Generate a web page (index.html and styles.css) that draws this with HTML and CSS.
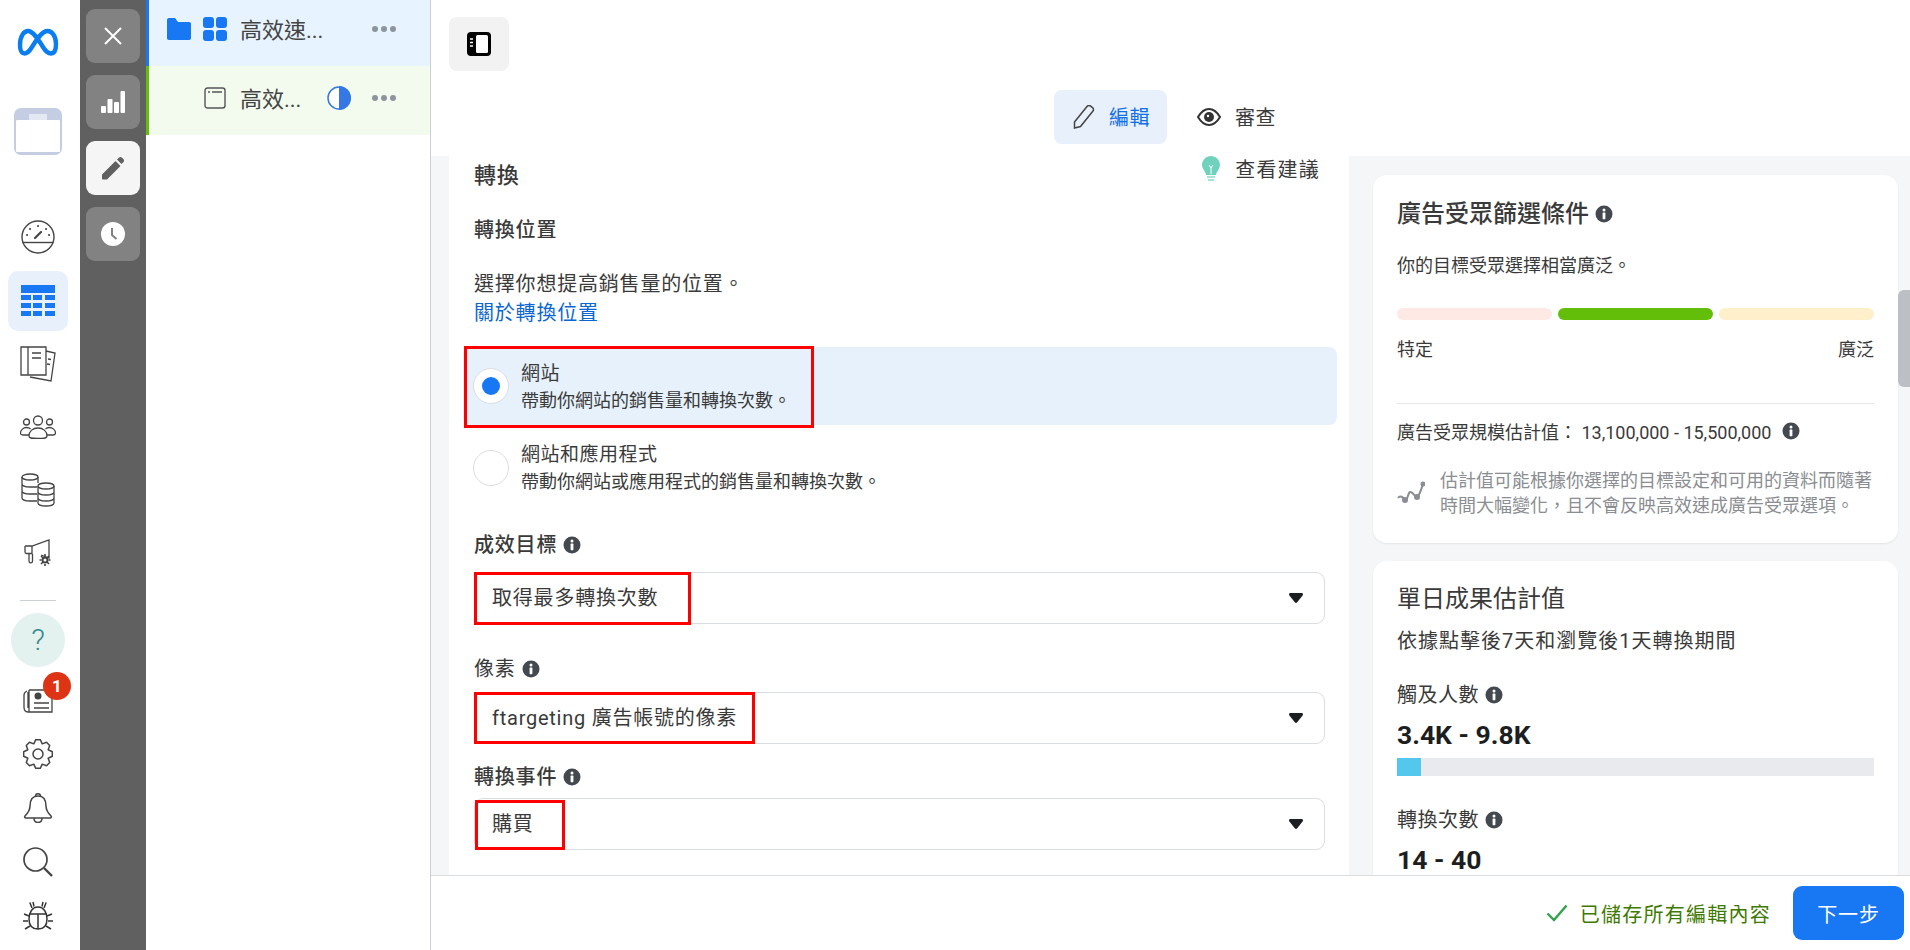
FILE: index.html
```html
<!DOCTYPE html>
<html>
	<head>
		<meta charset="UTF-8">
		<title>廣告編輯</title>
		<link rel="stylesheet" href="styles.css">
	</head>
	<body>
		<svg class="defs" width="0" height="0">
			<symbol id="info" viewBox="0 0 18 18">
				<circle cx="9" cy="9" r="8.5" fill="#444950"/>
				<circle cx="9" cy="5" r="1.5" fill="#fff"/>
				<rect x="7.6" y="7.6" width="2.8" height="6.6" rx=".6" fill="#fff"/>
			</symbol>
			<symbol id="caret" viewBox="0 0 16 12">
				<path d="M1 2.5c0-.8.5-1.5 1.4-1.5h11.2c.9 0 1.4.7 1.4 1.5 0 .4-.1.7-.4 1L9 10.6c-.5.6-1.5.6-2 0L1.400 3.500c-.3-.3-.4-.6-.4-1z" fill="#1c1e21"/>
			</symbol>
			<symbol id="dots" viewBox="0 0 24 6">
				<circle cx="3" cy="3" r="3" fill="#8d949e"/>
				<circle cx="12" cy="3" r="3" fill="#8d949e"/>
				<circle cx="21" cy="3" r="3" fill="#8d949e"/>
			</symbol>
		</svg>
		<div class="app">
			<nav class="nav">
				<svg class="logo" width="42" height="28" viewBox="0 0 42 28"><path d="M3 17C3 8 7 3 11 3c5 0 10 8 15 16 3 5 5 6.500 8 6.500s5-3.500 5-9.500c0-8-4-13-8.500-13C25 3 20 11 15 19c-3 5-5 6.500-7.500 6.500C4.500 25.500 3 22 3 17z" fill="none" stroke="#0a7ef0" stroke-width="4.400"/></svg>
				<svg class="case" width="48" height="47" viewBox="0 0 48 47"><rect width="48" height="47" rx="7" fill="#c5cde3"/><rect x="2" y="12" width="44" height="32" rx="1" fill="#fff"/><rect x="15" y="6" width="18" height="6" fill="#e4e8f2"/></svg>
				<svg class="gauge" width="34" height="34" viewBox="0 0 34 34" fill="none" stroke="#444" stroke-width="1.400"><circle cx="17" cy="17" r="16"/><path d="M1.500 22.500h31"/><path d="M14 18l6-6" stroke-width="2.200" stroke-linecap="round"/><path d="M6 15h.1M9 9h.1M17 6h.1M25 9h.1M28 15h.1" stroke-width="2" stroke-linecap="round"/></svg>
				<div class="nav-mid">
					<div class="nav-item nav-item-on">
						<svg width="34" height="32" viewBox="0 0 34 32" fill="#1877f2"><rect width="34" height="8"/><rect y="10" width="10" height="5"/><rect x="12" y="10" width="9" height="5"/><rect x="24" y="10" width="10" height="5"/><rect y="18" width="10" height="5"/><rect x="12" y="18" width="9" height="5"/><rect x="24" y="18" width="10" height="5"/><rect y="26" width="10" height="5"/><rect x="12" y="26" width="9" height="5"/><rect x="24" y="26" width="10" height="5"/></svg>
					</div>
					<div class="nav-item">
						<svg width="36" height="36" viewBox="0 0 36 36" fill="none" stroke="#444" stroke-width="1.300"><path d="M26 5l9 2-4 28-21-4"/><path d="M1 1h25v28H1zM8 1v28"/><path d="M12 7h9M12 12h9M28 13l3 .5M27 18l3 .5"/></svg>
					</div>
					<div class="nav-item">
						<svg width="36" height="24" viewBox="0 0 36 24" fill="none" stroke="#444" stroke-width="1.300"><circle cx="18" cy="5.500" r="4.500"/><circle cx="6.500" cy="7" r="3"/><circle cx="29.500" cy="7" r="3"/><path d="M9 21c0-5 4-8 9-8s9 3 9 8c0 2-2 2.500-9 2.500S9 23 9 21z"/><path d="M9 20H3c-2 0-2.500-1-2.500-2 0-3 3-5.500 6-5.500 1.500 0 3 .5 4 1.500M27 20h6c2 0 2.500-1 2.500-2 0-3-3-5.500-6-5.500-1.500 0-3 .5-4 1.500"/></svg>
					</div>
					<div class="nav-item">
						<svg width="34" height="34" viewBox="0 0 34 34" fill="none" stroke="#444" stroke-width="1.300"><ellipse cx="9" cy="4" rx="8" ry="3"/><path d="M1 4v21c0 1.500 3 3 8 3h7M17 4v6M1 11c0 1.500 3 3 8 3h7M1 18c0 1.500 3 3 8 3h7"/><ellipse cx="25" cy="13" rx="8" ry="3"/><path d="M17 13v17c0 1.500 3 3 8 3s8-1.500 8-3V13M17 19c0 1.500 3 3 8 3s8-1.500 8-3M17 25c0 1.500 3 3 8 3s8-1.500 8-3"/></svg>
					</div>
					<div class="nav-item">
						<svg width="28" height="28" viewBox="0 0 28 28" fill="none" stroke="#444" stroke-width="1.300"><path d="M1 7h7L25 1v18l-8-3"/><path d="M1 7v6c0 1 .5 1.500 1.500 1.500H8V7M5 14.500V22c0 2.500 3.500 2.500 3.500 0v-7"/><circle cx="21" cy="21" r="2.500" stroke-width="2"/><path d="M21 15v2M21 25v2M15.500 21h2M24.500 21h2M17 17l2 2M23 23l2 2M25 17l-2 2M19 23l-2 2" stroke-width="1.600"/></svg>
					</div>
				</div>
				<div class="nav-line"></div>
				<div class="help">?</div>
				<div class="nav-bottom">
					<div class="nav-item">
						<div class="news">
							<svg width="30" height="28" viewBox="0 0 30 28" fill="none" stroke="#444" stroke-width="1.300"><path d="M6 4h23v22H5c-3 0-4-2-4-5V9c0-2 1-3 3-4"/><path d="M6 4v22M5 6v16"/><circle cx="15" cy="10" r="3.500" fill="#444" stroke="none"/><path d="M11 17h15M11 22h15" stroke-width="1.600"/></svg>
							<span class="badge">1</span>
						</div>
					</div>
					<div class="nav-item">
						<svg width="30" height="30" viewBox="0 0 30 30" fill="none" stroke="#444" stroke-width="1.500" stroke-linejoin="round"><circle cx="15" cy="15" r="5"/><path d="M12.730.670H17.270L19.210 4.840 23.520 3.270 26.730 6.480 25.160 10.790 29.330 12.730V17.270L25.160 19.210 26.730 23.520 23.520 26.730 19.210 25.160 17.270 29.330H12.730L10.790 25.160 6.480 26.730 3.270 23.520 4.840 19.210.67 17.270V12.730L4.840 10.790 3.270 6.480 6.480 3.270 10.790 4.840z"/></svg>
					</div>
					<div class="nav-item">
						<svg width="30" height="30" viewBox="0 0 30 30" fill="none" stroke="#444" stroke-width="1.500"><path d="M15 3c-6 0-8 5-8 10 0 4-2 7-5 10-.8 1-.3 2 1 2h24c1.300 0 1.800-1 1-2-3-3-5-6-5-10 0-5-2-10-8-10z"/><path d="M12.500 3.500C12.500 1.500 14 .8 15 .8s2.500.7 2.500 2.700M11 25c0 3 2 4.500 4 4.500s4-1.500 4-4.500"/></svg>
					</div>
					<div class="nav-item">
						<svg width="30" height="30" viewBox="0 0 30 30" fill="none" stroke="#444" stroke-width="1.700"><circle cx="12.500" cy="12.500" r="11.500"/><path d="M21 21l8 8" stroke-width="2.400"/></svg>
					</div>
					<div class="nav-item">
						<svg width="30" height="30" viewBox="0 0 30 30" fill="none" stroke="#333" stroke-width="1.500"><path d="M15 6c-6 0-9 6-9 12s3 10 9 10 9-4 9-10-3-12-9-12z"/><path d="M6 13h18M15 13v15M9 7 7 2h-.5M21 7l2-5h.5M11 5.500 10 1M19 5.500 20 1M6 15l-5-2M24 15l5-2M5 20H0M25 20h5M7 25l-5 3M23 25l5 3"/></svg>
					</div>
				</div>
			</nav>
			<div class="tools">
				<div class="tool">
					<svg width="22" height="22" viewBox="0 0 22 22" stroke="#fff" stroke-width="2"><path d="M3 3l16 16M19 3L3 19"/></svg>
				</div>
				<div class="tool">
					<svg width="24" height="22" viewBox="0 0 24 22" fill="#fff"><rect y="15" width="5" height="7" rx="1"/><rect x="6.500" y="8" width="5" height="14" rx="1"/><rect x="13" y="11" width="5" height="11" rx="1"/><rect x="19.500" y="0" width="4.500" height="22" rx="1"/></svg>
				</div>
				<div class="tool tool-on">
					<svg width="24" height="24" viewBox="0 0 24 24" fill="#606060"><path d="M1 18.500 14.500 5l5 5L6 23.500H2c-.6 0-1-.4-1-1zM16 3.500l1.800-1.800c1-1 2.200-1 3.200 0l1.300 1.300c1 1 1 2.200 0 3.200L20.500 8z"/></svg>
				</div>
				<div class="tool">
					<svg width="24" height="24" viewBox="0 0 24 24"><circle cx="12" cy="12" r="12" fill="#fff"/><path d="M11 6v7l4.500 4" fill="none" stroke="#828282" stroke-width="2"/></svg>
				</div>
			</div>
			<aside class="tree">
				<div class="tree-row tree-row-blue">
					<svg class="folder" width="24" height="22" viewBox="0 0 24 22" fill="#1877f2"><path d="M0 2c0-1 .7-2 2-2h6l3 4h11c1.300 0 2 .8 2 2v14c0 1-.7 2-2 2H2c-1.300 0-2-1-2-2z"/></svg>
					<svg width="24" height="24" viewBox="0 0 24 24" fill="#1877f2"><rect width="11" height="11" rx="3"/><rect x="13" width="11" height="11" rx="3"/><rect y="13" width="11" height="11" rx="3"/><rect x="13" y="13" width="11" height="11" rx="3"/></svg>
					<span class="tree-name">高效速...</span>
					<svg class="tree-dots" width="24" height="6"><use href="#dots"/></svg>
				</div>
				<div class="tree-row tree-row-green">
					<svg class="page-icon" width="22" height="22" viewBox="0 0 22 22" fill="none" stroke="#555" stroke-width="1.400"><rect x="1" y="1" width="20" height="20" rx="2.500"/><path d="M4 5h2M8 5h10"/></svg>
					<span class="tree-name">高效...</span>
					<svg class="half" width="24" height="24" viewBox="0 0 24 24"><circle cx="12" cy="12" r="11" fill="#fff" stroke="#3578e5" stroke-width="1.500"/><path d="M12 0a12 12 0 0 1 0 24z" fill="#3578e5"/></svg>
					<svg class="tree-dots tree-dots-near" width="24" height="6"><use href="#dots"/></svg>
				</div>
			</aside>
			<main class="main">
				<header class="topbar">
					<div class="toggle">
						<svg width="24" height="24" viewBox="0 0 24 24"><rect width="24" height="24" rx="4" fill="#000"/><rect x="9" y="3" width="12" height="18" rx="1.500" fill="#fff"/><path d="M3 7h3M3 10.500h3M3 14h3" stroke="#fff" stroke-width="1.500"/></svg>
					</div>
					<div class="tabs">
						<div class="tab tab-on">
							<svg width="22" height="24" viewBox="0 0 22 24" fill="none" stroke="#444" stroke-width="1.500"><path d="M1.500 17.500 14 2c1-1.200 2.500-1.300 3.700-.3l1.800 1.400c1.200 1 1.300 2.500.3 3.700L7.500 22l-6 1.500z" transform="translate(0 -.5)"/></svg>
							<span>編輯</span>
						</div>
						<div class="tab tab-off">
							<svg width="24" height="18" viewBox="0 0 24 18"><path d="M1 9c3-5 7-8 11-8s8 3 11 8c-3 5-7 8-11 8S4 14 1 9z" fill="#fff" stroke="#333" stroke-width="2"/><circle cx="12" cy="9" r="5" fill="#333"/><circle cx="11" cy="8" r="1.200" fill="#fff"/></svg>
							<span>審查</span>
						</div>
					</div>
				</header>
				<div class="content">
					<section class="form">
						<div class="form-head">
							<h2 class="form-title">轉換</h2>
							<div class="tips">
								<svg width="18" height="25" viewBox="0 0 18 25"><path d="M9 0c5 0 9 4 9 9 0 3-2 5-3.500 8-.4 1-.5 1.500-.5 2H4c0-.5-.1-1-.5-2C2 14 0 12 0 9c0-5 4-9 9-9z" fill="#6fd2bc"/><path d="M7 9l2 3 2-3M9 12v6" stroke="#fff" stroke-width="1" fill="none"/><rect x="5" y="20" width="8" height="2" fill="#a8e4d6"/><rect x="6" y="23" width="6" height="2" fill="#a8e4d6"/></svg>
								<span>查看建議</span>
							</div>
						</div>
						<h3 class="label label-place">轉換位置</h3>
						<p class="desc">選擇你想提高銷售量的位置。</p>
						<a class="link" href="#">關於轉換位置</a>
						<div class="option option-on">
							<span class="radio"><span class="radio-dot"></span></span>
							<div class="option-text">
								<div class="option-title">網站</div>
								<div class="option-sub">帶動你網站的銷售量和轉換次數。</div>
							</div>
							<span class="mark mark-option"></span>
						</div>
						<div class="option option-off">
							<span class="radio"></span>
							<div class="option-text">
								<div class="option-title">網站和應用程式</div>
								<div class="option-sub">帶動你網站或應用程式的銷售量和轉換次數。</div>
							</div>
						</div>
						<h3 class="label label-goal">成效目標 <svg class="info" width="18" height="18"><use href="#info"/></svg></h3>
						<div class="select select-goal">
							<span>取得最多轉換次數</span>
							<svg width="16" height="12"><use href="#caret"/></svg>
							<span class="mark mark-goal"></span>
						</div>
						<h3 class="label label-thin label-pixel">像素 <svg class="info" width="18" height="18"><use href="#info"/></svg></h3>
						<div class="select select-pixel">
							<span>ftargeting 廣告帳號的像素</span>
							<svg width="16" height="12"><use href="#caret"/></svg>
							<span class="mark mark-pixel"></span>
						</div>
						<h3 class="label label-event">轉換事件 <svg class="info" width="18" height="18"><use href="#info"/></svg></h3>
						<div class="select select-event">
							<span>購買</span>
							<svg width="16" height="12"><use href="#caret"/></svg>
							<span class="mark mark-event"></span>
						</div>
					</section>
					<section class="side">
						<div class="card card-audience">
							<h2 class="card-title">廣告受眾篩選條件 <svg class="info" width="18" height="18"><use href="#info"/></svg></h2>
							<p class="card-sub">你的目標受眾選擇相當廣泛。</p>
							<div class="meter">
								<span class="meter-low"></span>
								<span class="meter-mid"></span>
								<span class="meter-high"></span>
							</div>
							<div class="meter-labels"><span>特定</span><span>廣泛</span></div>
							<div class="card-line"></div>
							<div class="size">廣告受眾規模估計值： 13,100,000 - 15,500,000 <svg class="info info-up" width="18" height="18"><use href="#info"/></svg></div>
							<div class="note">
								<svg width="28" height="24" viewBox="0 0 28 24" fill="none" stroke="#8a8d91" stroke-width="2"><path d="M1 17c2-3 5-1 7 2 2 2 3-7 5-8 3-1 5 6 7 5 3-1 4-10 7-14"/><circle cx="8" cy="19" r="3" fill="#8a8d91" stroke="none"/><circle cx="20" cy="16" r="3" fill="#8a8d91" stroke="none"/><circle cx="26" cy="3" r="2.500" fill="#8a8d91" stroke="none"/></svg>
								<p>估計值可能根據你選擇的目標設定和可用的資料而隨著<br>時間大幅變化，且不會反映高效速成廣告受眾選項。</p>
							</div>
						</div>
						<div class="card card-results">
							<h2 class="card-title card-title-thin">單日成果估計值</h2>
							<p class="results-sub">依據點擊後7天和瀏覽後1天轉換期間</p>
							<div class="stat-label stat-reach">觸及人數 <svg class="info" width="18" height="18"><use href="#info"/></svg></div>
							<div class="stat-value">3.4K - 9.8K</div>
							<div class="progress"><div class="progress-fill" style="width:5%"></div></div>
							<div class="stat-label stat-conv">轉換次數 <svg class="info" width="18" height="18"><use href="#info"/></svg></div>
							<div class="stat-value">14 - 40</div>
						</div>
					</section>
					<div class="scroll"><div class="scroll-thumb"></div></div>
				</div>
				<footer class="footer">
					<svg width="22" height="18" viewBox="0 0 22 18" fill="none" stroke="#31a24c" stroke-width="2.400"><path d="M1.500 9.500 8 16 20.500 1.500"/></svg>
					<span class="saved">已儲存所有編輯內容</span>
					<button class="next">下一步</button>
				</footer>
			</main>
		</div>
	</body>
</html>
```

FILE: styles.css
```css
* {
	margin: 0;
	padding: 0;
	box-sizing: border-box;
}

html, body {
	height: 100%;
	overflow: hidden;
}

body {
	font-family: Roboto, "Noto Sans CJK TC", sans-serif;
	font-size: 20px;
	color: #3a3a3a;
	background: #fff;
}

svg {
	display: block;
	flex: none;
}

.defs {
	position: absolute;
}

.app {
	display: flex;
	height: 950px;
}

/* left nav */
.nav {
	width: 80px;
	display: flex;
	flex-direction: column;
	align-items: center;
	padding: 28px 4px 0 0;
}
.case {
	margin-top: 52px;
}
.gauge {
	margin-top: 65px;
}
.nav-mid {
	margin-top: 15px;
	width: 100%;
}
.nav-item {
	width: 60px;
	height: 63px;
	margin: 0 auto;
	display: flex;
	align-items: center;
	justify-content: center;
}
.nav-item-on {
	height: 60px;
	margin-top: 2px;
	margin-bottom: 1px;
	background: #e7f0fb;
	border-radius: 10px;
}
.nav-line {
	width: 36px;
	height: 1px;
	background: #ccd0d5;
	margin-top: 16px;
}
.help {
	width: 54px;
	height: 54px;
	margin-top: 12px;
	border-radius: 50%;
	background: #e3f2ee;
	color: #3a8a92;
	font-size: 30px;
	font-weight: 300;
	line-height: 54px;
	text-align: center;
}
.nav-bottom {
	margin-top: 6px;
}
.nav-bottom .nav-item {
	height: 54px;
}
.news {
	position: relative;
}
.badge {
	position: absolute;
	left: 20px;
	top: -14px;
	width: 28px;
	height: 28px;
	border-radius: 50%;
	background: #dc3415;
	color: #fff;
	font-size: 17px;
	font-weight: 700;
	line-height: 28px;
	text-align: center;
}

/* tool strip */
.tools {
	width: 66px;
	background: #606060;
	padding: 9px 6px;
	display: flex;
	flex-direction: column;
	gap: 12px;
}
.tool {
	width: 54px;
	height: 54px;
	background: #828282;
	border-radius: 9px;
	display: flex;
	align-items: center;
	justify-content: center;
}
.tool-on {
	background: #f5f5f5;
}

/* campaign tree */
.tree {
	width: 285px;
	border-right: 1px solid #ccd0d5;
}
.tree-row {
	display: flex;
	align-items: center;
	color: #444;
	font-size: 22px;
	border-left: 3px solid;
}
.tree-row-blue {
	height: 66px;
	padding: 0 0 8px 18px;
	background: #e7f3ff;
	border-color: #1877f2;
}
.tree-row-green {
	height: 69px;
	padding: 0 0 5px 55px;
	background: #f3faee;
	border-color: #63be09;
}
.folder {
	margin-right: 12px;
}
.tree-name {
	margin-left: 13px;
	padding-bottom: 2px;
}
.tree-dots {
	margin-left: 49px;
}
.page-icon {
	margin-right: 1px;
}
.half {
	margin-left: 26px;
}
.tree-dots-near {
	margin-left: 21px;
}

/* main */
.main {
	flex: 1;
	min-width: 0;
	display: flex;
	flex-direction: column;
}
.topbar {
	height: 156px;
	padding: 17px 0 0 18px;
	flex: none;
}
.toggle {
	width: 60px;
	height: 54px;
	border-radius: 8px;
	background: #f2f2f2;
	display: flex;
	align-items: center;
	justify-content: center;
}
.tabs {
	display: flex;
	justify-content: center;
	gap: 11px;
	margin: 19px 0 0 -18px;
}
.tab {
	height: 54px;
	display: flex;
	align-items: center;
	border-radius: 8px;
	letter-spacing: .5px;
}
.tab span {
	padding-bottom: 2px;
}
.tab-on {
	padding: 0 17px 0 19px;
	gap: 14px;
	background: #e7f0fb;
	color: #0f6fe8;
}
.tab-off {
	padding: 0 11px 0 19px;
	gap: 14px;
}

.content {
	flex: 1;
	min-height: 0;
	overflow: hidden;
	display: flex;
	background: #f5f6f7;
	padding-left: 18px;
}

/* form */
.form {
	width: 900px;
	flex: none;
	background: #fff;
	padding: 0 24px 0 25px;
	letter-spacing: .8px;
}
.form-head {
	display: flex;
	justify-content: space-between;
	height: 40px;
}
.form-title {
	font-size: 22px;
	font-weight: 500;
	line-height: 39px;
}
.tips {
	display: flex;
	align-items: center;
	gap: 15px;
	height: 24px;
	margin-right: 5px;
	letter-spacing: 1.200px;
}
.label {
	display: flex;
	align-items: center;
	gap: 6px;
	font-size: 20px;
	font-weight: 500;
	line-height: 30px;
}
.label-thin {
	font-weight: 400;
}
.label-place {
	margin-top: 19px;
}
.desc {
	margin-top: 24px;
	line-height: 30px;
}
.link {
	display: block;
	margin-top: -1px;
	line-height: 30px;
	color: #0a66d0;
	text-decoration: none;
}
.option {
	position: relative;
	display: flex;
	align-items: center;
	gap: 12px;
	width: 874px;
	margin-left: -11px;
	padding-left: 10px;
	border-radius: 8px;
}
.option-text {
	padding-top: 3px;
}
.option-on {
	height: 78px;
	margin-top: 19px;
	background: #e6f1fc;
}
.option-off {
	height: 85px;
}
.option-title {
	font-size: 19px;
	line-height: 26px;
	letter-spacing: .5px;
}
.option-sub {
	font-size: 18px;
	line-height: 28px;
	letter-spacing: 0;
}
.radio {
	width: 36px;
	height: 36px;
	flex: none;
	border: 1px solid #dadde1;
	border-radius: 50%;
	background: #fff;
	display: flex;
	align-items: center;
	justify-content: center;
}
.radio-dot {
	width: 18px;
	height: 18px;
	border-radius: 50%;
	background: #1877f2;
}
.label-goal {
	margin-top: 20px;
}
.label-pixel {
	margin-top: 30px;
}
.label-event {
	margin-top: 18px;
}
.select {
	position: relative;
	height: 52px;
	display: flex;
	align-items: center;
	justify-content: space-between;
	padding: 0 20px 0 17px;
	border: 1px solid #dadde1;
	border-radius: 9px;
}
.select > span:first-child {
	padding-bottom: 4px;
}
.select-goal {
	margin-top: 12px;
}
.select-pixel {
	margin-top: 8px;
	letter-spacing: .75px;
}
.select-event {
	margin-top: 6px;
}

/* red annotation boxes */
.mark {
	position: absolute;
	border: 3px solid #f00;
}
.mark-option {
	left: 1px;
	top: -1px;
	width: 350px;
	height: 82px;
}
.mark-goal {
	left: -1px;
	top: -1px;
	width: 217px;
	height: 53px;
}
.mark-pixel {
	left: -1px;
	top: -1px;
	width: 281px;
	height: 52px;
}
.mark-event {
	left: 0;
	top: 1px;
	width: 90px;
	height: 50px;
}
.info {
	display: block;
}

/* right column */
.side {
	width: 525px;
	flex: none;
	margin-left: 24px;
	padding-top: 19px;
}
.card {
	background: #fff;
	border-radius: 14px;
	padding: 21px 24px 0;
	box-shadow: 0 1px 2px rgba(0, 0, 0, .08);
}
.card-audience {
	height: 368px;
	font-size: 18px;
}
.card-results {
	height: 340px;
	margin-top: 18px;
}
.card-title {
	display: flex;
	align-items: center;
	gap: 6px;
	font-size: 24px;
	font-weight: 500;
	line-height: 34px;
}
.card-audience .card-title {
	padding-top: 1px;
	margin-bottom: -1px;
}
.card-title-thin {
	font-weight: 400;
}
.card-sub {
	margin-top: 23px;
	line-height: 26px;
}
.meter {
	display: flex;
	gap: 6px;
	margin-top: 29px;
}
.meter span {
	height: 12px;
	flex: 1;
	border-radius: 6px;
}
.meter-low {
	background: #ffe9e5;
}
.meter-mid {
	background: #63be09;
}
.meter-high {
	background: #fff0cb;
}
.meter-labels {
	display: flex;
	justify-content: space-between;
	margin-top: 17px;
	line-height: 26px;
}
.card-line {
	height: 1px;
	margin-top: 40px;
	background: #e4e6eb;
}
.size {
	display: flex;
	align-items: center;
	gap: 6px;
	margin-top: 16px;
	line-height: 26px;
	white-space: pre;
}
.info-up {
	margin-top: -4px;
}
.note {
	display: flex;
	align-items: center;
	gap: 15px;
	margin-top: 22px;
	color: #8a8d91;
	line-height: 25px;
}
.results-sub {
	margin-top: 11px;
	line-height: 28px;
	letter-spacing: 1px;
}
.stat-label {
	display: flex;
	align-items: center;
	gap: 6px;
	line-height: 30px;
	letter-spacing: .5px;
}
.stat-reach {
	margin-top: 25px;
}
.stat-conv {
	margin-top: 29px;
}
.stat-value {
	margin-top: 9px;
	margin-bottom: -1px;
	font-size: 26.500px;
	font-weight: 700;
	line-height: 32px;
	color: #1c1e21;
}
.progress {
	height: 18px;
	margin-top: 8px;
	background: #e9eaee;
}
.progress-fill {
	height: 100%;
	background: #54c7ec;
}
.scroll {
	width: 12px;
	flex: none;
	padding-top: 134px;
}
.scroll-thumb {
	height: 97px;
	border-radius: 6px 0 0 6px;
	background: #bcc0c4;
}

/* footer */
.footer {
	height: 75px;
	flex: none;
	display: flex;
	align-items: center;
	justify-content: flex-end;
	padding-right: 6px;
	border-top: 1px solid #dadde1;
	background: #fff;
}
.saved {
	margin-left: 12px;
	color: #3f7a00;
	letter-spacing: 1.250px;
}
.next {
	width: 111px;
	height: 54px;
	margin-left: 22px;
	border: none;
	border-radius: 9px;
	background: #1877f2;
	color: #fff;
	font: inherit;
	letter-spacing: .8px;
}
```
